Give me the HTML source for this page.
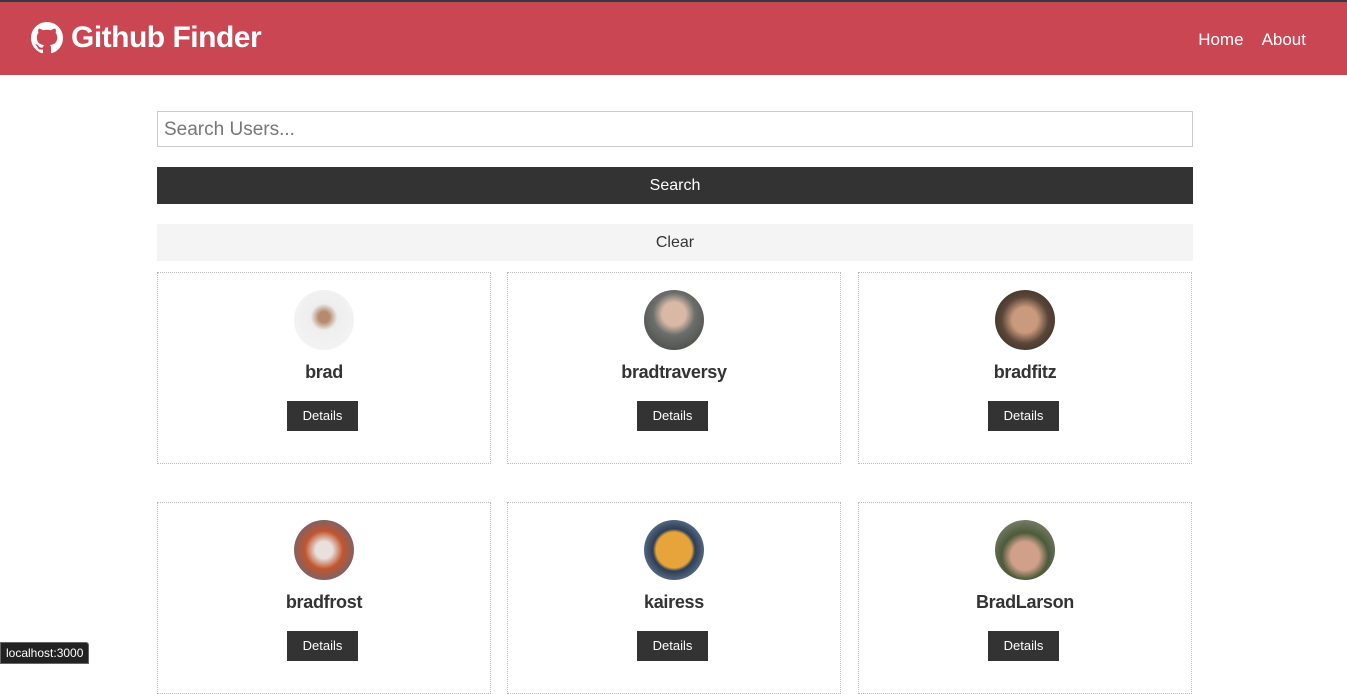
<!DOCTYPE html>
<html><head><style>
*{box-sizing:border-box;margin:0;padding:0}
body{width:1347px;height:662px;overflow:hidden;background:#fff;font-family:"Liberation Sans",sans-serif;color:#333;position:relative}
.nav{position:absolute;top:0;left:0;width:1347px;height:75px;background:#c94652;border-top:2px solid #333844}
.logo{position:absolute;left:31px;top:19px;color:#fff;font-size:30px;font-weight:bold;display:flex;align-items:center;letter-spacing:-0.5px}
.logo svg{margin-right:8px}
.links{position:absolute;right:41px;top:28px;color:#fff;font-size:17px}
.links span{margin-left:18px}
.input{position:absolute;left:157px;top:111px;width:1036px;height:36px;border:1px solid #ccc;font-size:19px;color:#777;padding:7px 6px}
.btn{position:absolute;left:157px;width:1036px;height:37px;text-align:center;line-height:37px;font-size:16px}
.card{position:absolute;width:334px;height:192px;border:1px dotted #bbb;text-align:center}
.av{width:60px;height:60px;border-radius:50%;margin:17px auto 0}
.nm{font-size:18px;font-weight:bold;color:#333;margin-top:12px;height:24px;letter-spacing:-0.3px}
.d{display:inline-block;width:71px;height:30px;background:#333;color:#fff;font-size:13px;line-height:30px;margin-top:15px;margin-left:-3px}
.tip{position:absolute;left:0;top:642px;background:#222;color:#fff;font-size:12px;padding:3px 5px;border:1px solid #666;border-radius:0 3px 0 0}
</style></head><body>
<div class="nav">
<div class="logo"><svg width="32" height="32" viewBox="0 0 16 16"><path fill="#fff" d="M8 0C3.58 0 0 3.580 0 8c0 3.54 2.29 6.53 5.47 7.590.4.07.55-.17.55-.38 0-.19-.01-.82-.01-1.49-2.010.37-2.53-.49-2.69-.94-.09-.23-.48-.94-.82-1.13-.28-.15-.68-.52-.01-.53.63-.01 1.08.58 1.23.82.72 1.21 1.870.87 2.33.66.07-.52.28-.87.51-1.07-1.78-.2-3.64-.89-3.64-3.95 0-.87.31-1.59.82-2.15-.08-.2-.36-1.020.08-2.12 0 0 .67-.21 2.2.82.64-.18 1.32-.27 2-.27.68 0 1.360.09 2 .27 1.53-1.04 2.2-.82 2.2-.82.44 1.1.16 1.92.08 2.12.51.56.82 1.27.82 2.15 0 3.07-1.87 3.75-3.65 3.95.29.25.54.73.54 1.48 0 1.07-.01 1.93-.01 2.2 0 .21.15.46.55.38A8.013 8.013 0 0016 8c0-4.42-3.58-8-8-8z"/></svg>Github Finder</div>
<div class="links"><span>Home</span><span>About</span></div>
</div>
<div class="input">Search Users...</div>
<div class="btn" style="top:167px;background:#333;color:#fff">Search</div>
<div class="btn" style="top:224px;background:#f4f4f4;color:#333">Clear</div>

<div class="card" style="left:157px;top:272px"><div class="av" style="background:radial-gradient(circle at 50% 45%,#b58a6e 0 12%,#eee 30%,#f6f6f6)"></div><div class="nm">brad</div><span class="d">Details</span></div>
<div class="card" style="left:507px;top:272px"><div class="av" style="background:radial-gradient(circle at 50% 40%,#d9b9a6 0 25%,#6b6e6a 45%,#3c3f3a)"></div><div class="nm">bradtraversy</div><span class="d">Details</span></div>
<div class="card" style="left:858px;top:272px"><div class="av" style="background:radial-gradient(circle at 50% 50%,#c99a7d 0 30%,#5a4638 55%,#2a2622)"></div><div class="nm">bradfitz</div><span class="d">Details</span></div>

<div class="card" style="left:157px;top:502px"><div class="av" style="background:radial-gradient(circle at 50% 50%,#e8e0dc 0 20%,#c0552e 45%,#3c6fa0)"></div><div class="nm">bradfrost</div><span class="d">Details</span></div>
<div class="card" style="left:507px;top:502px"><div class="av" style="background:radial-gradient(circle at 50% 50%,#e6a43a 0 42%,#2d3e57 50%,#8aa0b8)"></div><div class="nm">kairess</div><span class="d">Details</span></div>
<div class="card" style="left:858px;top:502px"><div class="av" style="background:radial-gradient(circle at 50% 60%,#d1a08a 0 30%,#4c5a3a 50%,#9a9a8a)"></div><div class="nm">BradLarson</div><span class="d">Details</span></div>
<div class="tip">localhost:3000</div>
</body></html>
